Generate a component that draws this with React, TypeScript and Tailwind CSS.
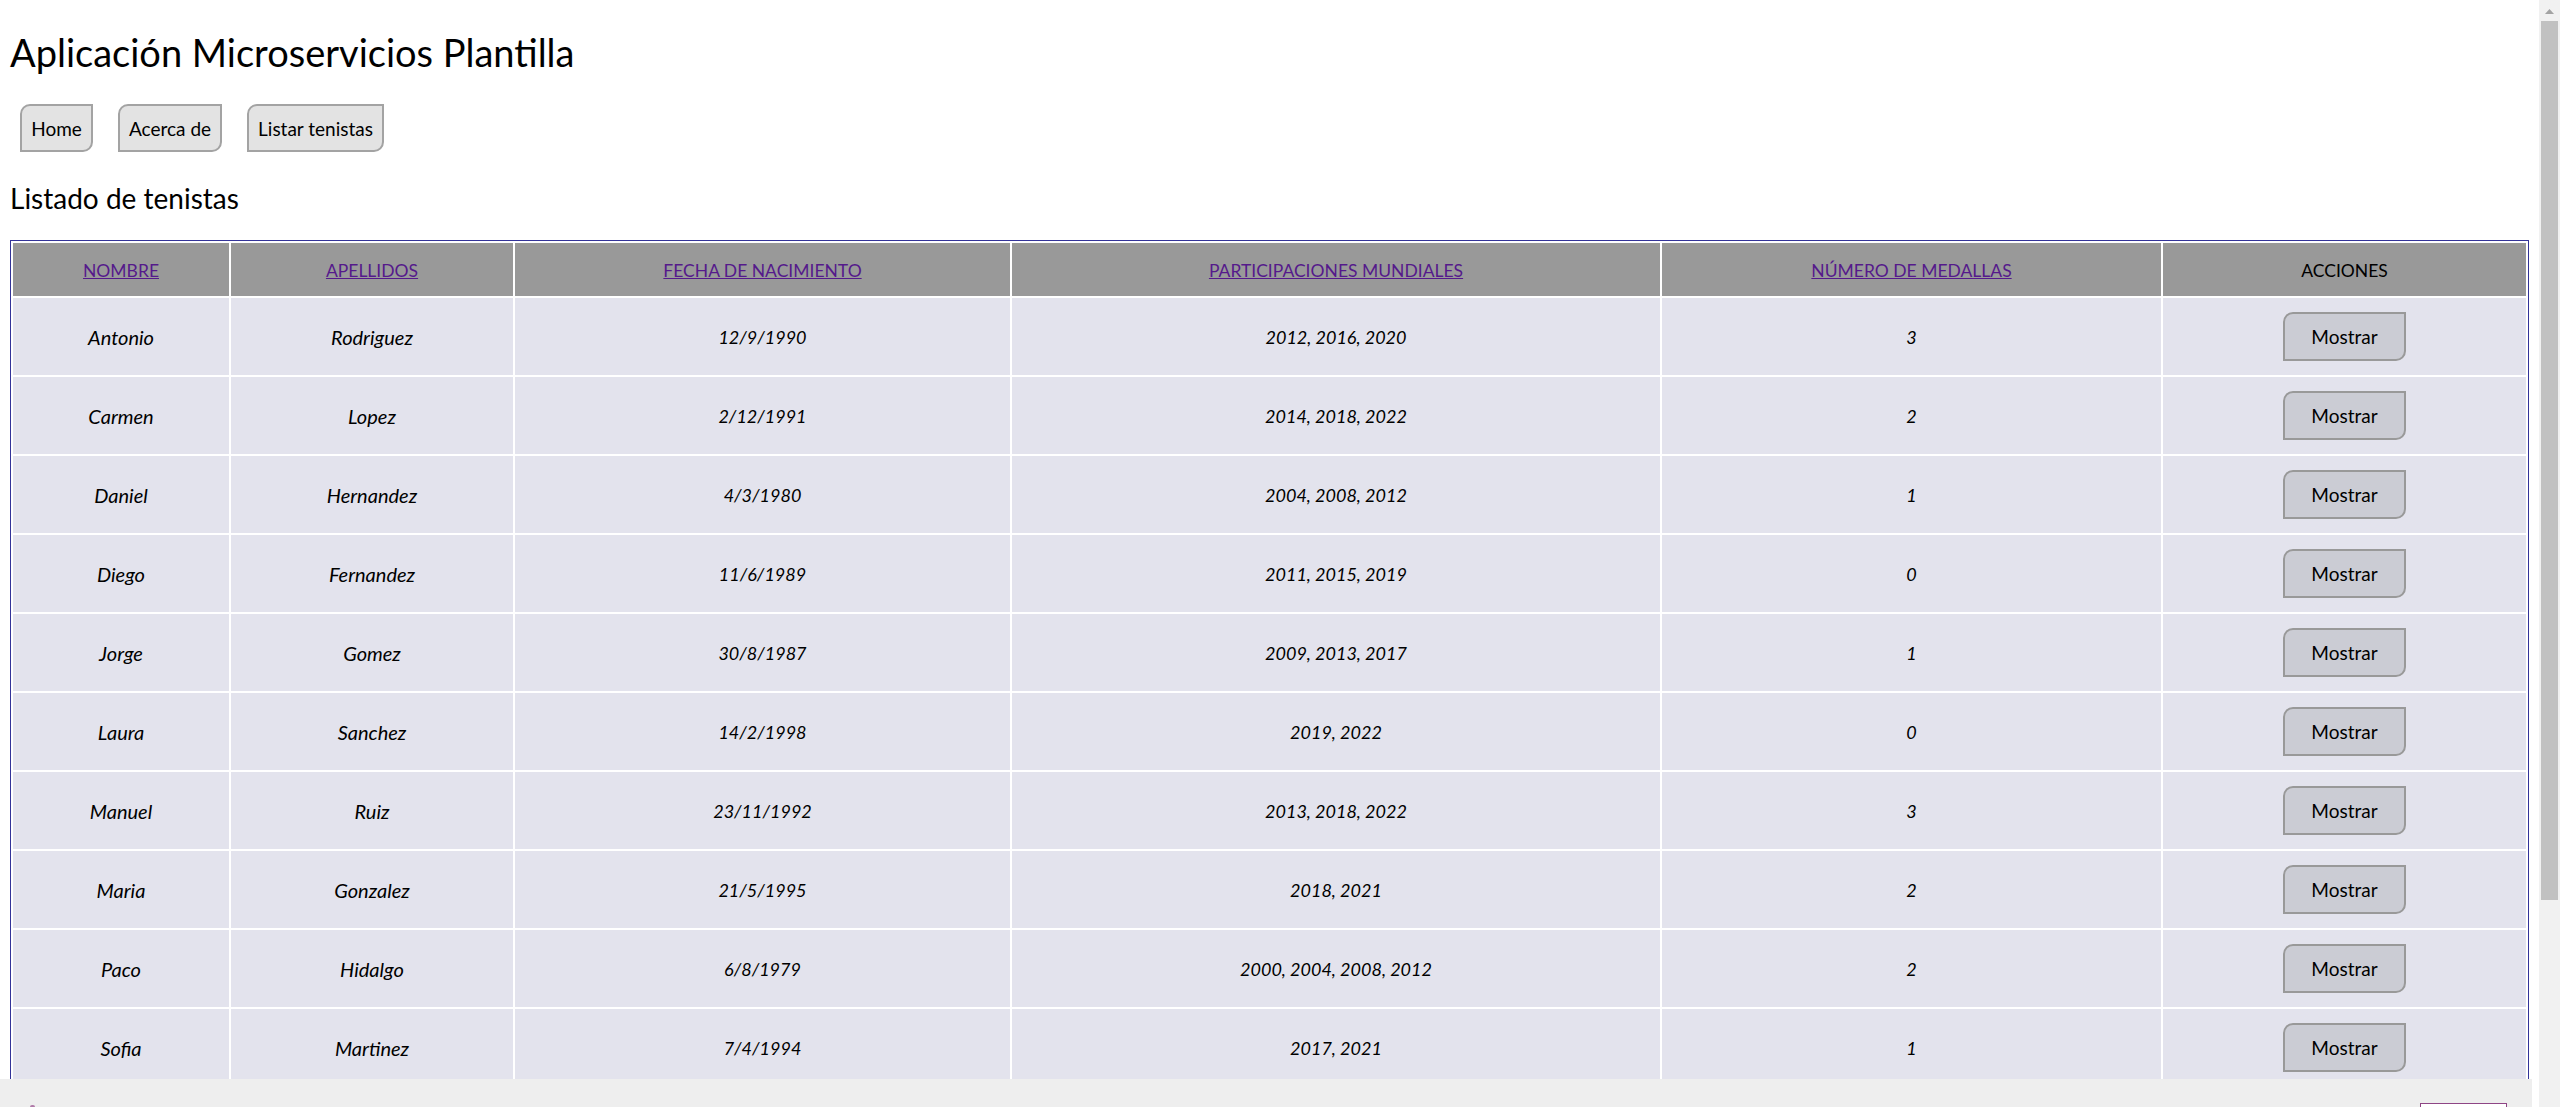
import React from "react";

const rows = [
  ["Antonio", "Rodriguez", "12/9/1990", "2012, 2016, 2020", "3"],
  ["Carmen", "Lopez", "2/12/1991", "2014, 2018, 2022", "2"],
  ["Daniel", "Hernandez", "4/3/1980", "2004, 2008, 2012", "1"],
  ["Diego", "Fernandez", "11/6/1989", "2011, 2015, 2019", "0"],
  ["Jorge", "Gomez", "30/8/1987", "2009, 2013, 2017", "1"],
  ["Laura", "Sanchez", "14/2/1998", "2019, 2022", "0"],
  ["Manuel", "Ruiz", "23/11/1992", "2013, 2018, 2022", "3"],
  ["Maria", "Gonzalez", "21/5/1995", "2018, 2021", "2"],
  ["Paco", "Hidalgo", "6/8/1979", "2000, 2004, 2008, 2012", "2"],
  ["Sofia", "Martinez", "7/4/1994", "2017, 2021", "1"],
];

const headers = [
  { label: "NOMBRE", w: "w-[216px]" },
  { label: "APELLIDOS", w: "w-[282px]" },
  { label: "FECHA DE NACIMIENTO", w: "w-[495px]" },
  { label: "PARTICIPACIONES MUNDIALES", w: "w-[648px]" },
  { label: "NÚMERO DE MEDALLAS", w: "w-[499px]" },
];

export default function App() {
  return (
    <div className="flex h-[1107px] w-[2560px] overflow-hidden bg-white text-black font-['Lato','Noto_Sans',sans-serif]">
      <div className="relative h-full w-[2539px] overflow-hidden">
        <h1 className="ml-[10px] mt-[32px] text-[38px] leading-[40px] font-normal">
          Aplicación Microservicios Plantilla
        </h1>
        <nav className="ml-[20px] mt-[32px] flex gap-[25px]">
          {[
            ["Home", "w-[73px]"],
            ["Acerca de", "w-[104px]"],
            ["Listar tenistas", "w-[137px]"],
          ].map(([t, w]) => (
            <button
              key={t}
              className={`${w} h-[48px] border-2 border-[#a3a3a3] bg-[#e3e3e3] pt-[2px] rounded-tl-[10px] rounded-br-[10px] text-[19px] text-black`}
            >
              {t}
            </button>
          ))}
        </nav>
        <h2 className="ml-[10px] mt-[31px] text-[28px] leading-[30px] font-normal">
          Listado de tenistas
        </h2>
        <table className="ml-[10px] mt-[27px] w-[2519px] table-fixed border border-[#333399] border-separate border-spacing-[2px]">
          <thead>
            <tr>
              {headers.map((h) => (
                <th
                  key={h.label}
                  className={`${h.w} h-[53px] bg-[#999999] p-0 pt-[3px] text-center text-[17.5px] font-normal`}
                >
                  <a className="text-[#551a8b] underline cursor-pointer">{h.label}</a>
                </th>
              ))}
              <th className="w-[363px] h-[53px] bg-[#999999] p-0 pt-[3px] text-center text-[17.5px] font-normal text-black">
                ACCIONES
              </th>
            </tr>
          </thead>
          <tbody>
            {rows.map((r) => (
              <tr key={r[0]}>
                {r.map((c, i) => (
                  <td
                    key={i}
                    className={`h-[77px] bg-[#e3e3ed] p-0 text-center italic ${i < 2 ? "text-[20px]" : "text-[18px] pt-[2px]"}`}
                  >
                    {c}
                  </td>
                ))}
                <td className="h-[77px] bg-[#e3e3ed] p-0 text-center">
                  <button className="inline-flex h-[49px] w-[123px] items-center justify-center border-2 border-[#999999] bg-[#cbccd4] pt-[2px] rounded-tl-[10px] rounded-br-[10px] text-[19px] text-black">
                    Mostrar
                  </button>
                </td>
              </tr>
            ))}
          </tbody>
        </table>
        <footer className="absolute left-0 top-[1079px] flex h-[60px] w-[2532px] items-start justify-between bg-[#eeeeee]">
          <div className="ml-[30px] mt-[26px] h-[8px] w-[5px] rounded-t-[2px] bg-[#b07aa8]"></div>
          <div className="mr-[25px] mt-[24px] h-[40px] w-[87px] border border-[#8e4585] bg-white"></div>
        </footer>
      </div>
      <div className="flex h-full w-[21px] flex-col items-center bg-[#f1f1f1]">
        <svg width="21" height="21" viewBox="0 0 21 21" className="shrink-0">
          <polygon points="6,14 15,14 10.5,9" fill="#a3a3a3" />
        </svg>
        <div className="h-[879px] w-[17px] bg-[#c1c1c1]"></div>
      </div>
    </div>
  );
}
